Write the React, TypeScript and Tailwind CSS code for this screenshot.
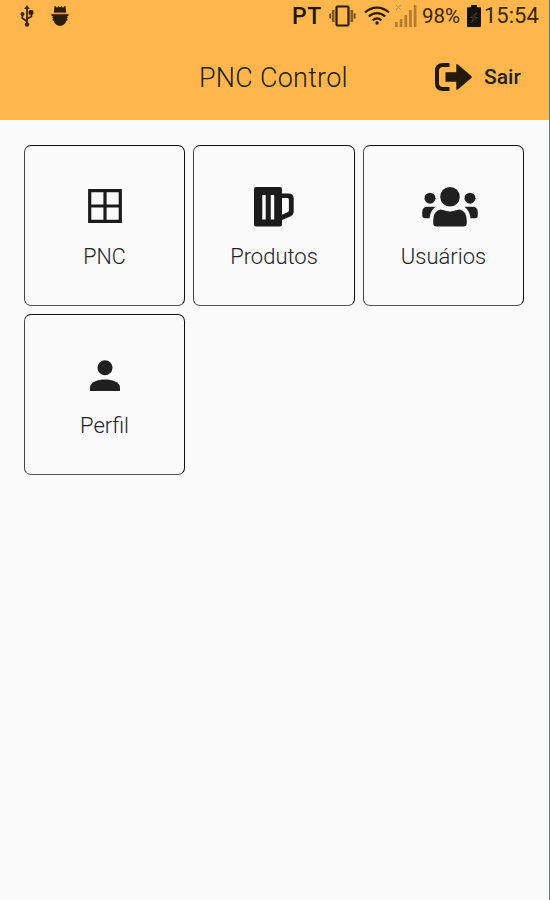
import type { ReactNode } from "react"

const UsbIcon = () => (
  <svg width="14" height="24" viewBox="0 0 14 24" fill="none" stroke="#3a2812" strokeWidth="1.800">
    <path d="M7 3v17M2.300 10.500v3.500l4.700 3.500M11.300 9.500v3L7 15" />
    <path d="M7 1l2.800 4H4.200z" fill="#3a2812" stroke="none" />
    <circle cx="7" cy="20.500" r="2.200" fill="#3a2812" stroke="none" />
    <circle cx="2.500" cy="10" r="2" fill="#3a2812" stroke="none" />
    <rect x="8.600" y="6" width="4.800" height="4.800" rx="1.500" fill="#2b1c0c" stroke="none" />
  </svg>
)

const DebugIcon = () => (
  <svg width="20" height="22" viewBox="0 0 20 22">
    <path d="M4.500 1l1.500.5L7 3l1.500-2L10 2.500 11.500 1 13 3l1-1.500 1.500-.5.700 6.800H3.800z" fill="#2b1c0c" />
    <path d="M3.500 8.300h13" stroke="#e58a55" strokeWidth="1.200" />
    <path d="M1 9.300h18l-.8 1.700H17l1 1.500-1.300.5c.2 1 .8 1.600 1.300 2l-1.600.8C15.300 19 13 21 10 21s-5.300-2-6.400-5.200L2 15c.5-.4 1.100-1 1.300-2L2 12.500 3 11H1.800z" fill="#2b1c0c" />
  </svg>
)

const VibrateIcon = () => (
  <svg width="27" height="24" viewBox="0 0 27 24" fill="none" stroke="#2b1c0c">
    <rect x="7.500" y="2.500" width="12" height="19" rx="1" strokeWidth="2.200" />
    <path d="M4.200 6v12M22.800 6v12" strokeWidth="2.600" strokeOpacity=".6" />
    <path d="M1.200 9.500v5M25.600 9.500v5" strokeWidth="1.600" strokeOpacity=".8" />
  </svg>
)

const WifiIcon = () => (
  <svg width="26" height="20" viewBox="0 0 26 20" fill="none" stroke="#2b1c0c" strokeWidth="2.200">
    <path d="M1 6.500c7-6.500 17-6.500 24 0M4.800 10.500c5-4.500 11.400-4.500 16.400 0M8.600 14.300c2.800-2.400 6-2.400 8.800 0" />
    <circle cx="13" cy="17" r="1.700" fill="#2b1c0c" stroke="none" />
  </svg>
)

const SignalIcon = () => (
  <svg width="22" height="22" viewBox="0 0 22 22" fill="#b67b31">
    <path d="M0 17h2.700v5H0zM4.700 14h2.700v8H4.700zM9.400 10h2.700v12H9.400zM14.100 5h2.700v17h-2.700zM18.800 0h2.700v22h-2.700z" />
    <path d="M1 0l5 5M6 0L1 5" stroke="#c98c40" strokeWidth="1" />
  </svg>
)

const BatteryIcon = () => (
  <svg width="14" height="22" viewBox="0 0 14 22" fill="#16120e">
    <path d="M4 0h6v2.300h3a1 1 0 0 1 1 1V21a1 1 0 0 1-1 1H1a1 1 0 0 1-1-1V3.300a1 1 0 0 1 1-1h3z" />
    <path d="M9.500 8L3.500 12.500l3 .5-2 4.500 6-5-3.500-.3z" stroke="#4b443b" strokeWidth=".8" />
  </svg>
)

const LogoutIcon = () => (
  <svg width="38" height="28" viewBox="0 0 38 28">
    <path d="M14.500 2H8Q2 2 2 8v12q0 6 6 6h6.500" fill="none" stroke="#22190f" strokeWidth="4" />
    <path d="M10.500 9.300h10.800V2.200q0-2 1.600-.6L36.300 13q1.200 1 0 2L22.900 26.400q-1.600 1.200-1.600-.6v-7H10.500z" fill="#22190f" />
  </svg>
)

const WindowIcon = () => (
  <svg width="34" height="34" viewBox="0 0 34 34" fill="none" stroke="#1b1b1b" strokeWidth="3.200">
    <path d="M1.700 1.700h30.600v30.600H1.700zM17 1.700v30.600M1.700 17h30.600" />
  </svg>
)

const BeerIcon = () => (
  <svg width="40" height="40" viewBox="0 0 40 40">
    <path d="M2 0h24q2 0 2 2v4.500h6.500q5.200 0 5.200 5.200v12.500q0 3.800-3.400 5.200L28 33v4.500q0 2-2 2H2q-2 0-2-2V2q0-2 2-2zM28 11v16.800l5.500-2.500q1.400-.6 1.400-2V12.500q0-1.500-1.500-1.500zM8.300 8v24.500h3.400V8zM16.800 8v24.500h3.400V8z" fill="#1b1b1b" fillRule="evenodd" />
  </svg>
)

const UsersIcon = () => (
  <svg width="56" height="40" viewBox="0 0 56 40" fill="#202020">
    <circle cx="28" cy="9.800" r="9.800" />
    <circle cx="8" cy="11.200" r="5.500" />
    <circle cx="48" cy="11.200" r="5.500" />
    <path d="M18.500 22.500q1.400 0 2.500.5 7 2.800 14 0 1.100-.5 2.500-.5 7.300 1.500 7.300 11V36q0 3.500-3.500 3.500H14.700q-3.500 0-3.500-3.500v-2.500q0-9.500 7.300-11z" />
    <path d="M5.500 19.700h8q-5 3.800-6 11.500H3.200q-3 0-3-3v-2.700q0-5.800 5.300-5.800zM42.500 19.700h8q5.300 0 5.300 5.800v2.700q0 3-3 3h-4.300q-1-7.700-6-11.500z" />
  </svg>
)

const PersonIcon = () => (
  <svg width="30" height="32" viewBox="0 0 30 32" fill="#202020">
    <circle cx="15" cy="7.700" r="7.500" />
    <path d="M0 31v-3.500C0 22 8 19.500 15 19.500s15 2.500 15 8V31z" />
  </svg>
)

type Tile = { label: string; icon: ReactNode; iconClass: string; textClass: string }

const tiles: Tile[] = [
  { label: "PNC", icon: <WindowIcon />, iconClass: "pb-[2px]", textClass: "text-[21.5px]" },
  { label: "Produtos", icon: <BeerIcon />, iconClass: "", textClass: "text-[22px]" },
  { label: "Usuários", icon: <UsersIcon />, iconClass: "pl-[12px]", textClass: "text-[22px]" },
  { label: "Perfil", icon: <PersonIcon />, iconClass: "", textClass: "text-[22px]" },
]

const App = () => {
  return (
    <main className="h-[900px] w-[550px] overflow-hidden border-r border-[#62778a] bg-[#fafafa] font-['Roboto',sans-serif] text-[#222]">
      <header className="h-[120px] bg-[#ffb74d]">
        {/* Status bar */}
        <div className="flex h-8 items-center pl-5 text-[#39260f]">
          <UsbIcon />
          <div className="ml-[16px]"><DebugIcon /></div>
          <span className="ml-[222px] w-[37px] text-[23px] leading-none font-medium tracking-[0.5px] text-[#21170c]">PT</span>
          <VibrateIcon />
          <div className="ml-2"><WifiIcon /></div>
          <div className="ml-[5px]"><SignalIcon /></div>
          <span className="ml-[5px] w-[45px] text-[20.5px] leading-none whitespace-nowrap">98%</span>
          <BatteryIcon />
          <span className="ml-[3px] text-[22px] leading-none whitespace-nowrap">15:54</span>
        </div>

        {/* Title and logout */}
        <div className="flex h-[88px] items-center">
          <h1 className="mt-[4px] ml-[199px] w-[236px] text-[27px] leading-none font-light tracking-[0.25px] whitespace-nowrap">PNC Control</h1>
          <button className="flex items-center pt-[2px]">
            <LogoutIcon />
            <span className="ml-[11px] text-[21px] leading-none font-medium">Sair</span>
          </button>
        </div>
      </header>

      <section className="grid grid-cols-[161px_162px_161px] gap-x-2 gap-y-2 pt-[25px] pl-6">
        {tiles.map((tile) => (
          <button key={tile.label} className="flex h-[161px] flex-col items-center rounded-[7px] border border-t-[#111] border-r-[#111] border-b-[#555] border-l-[#444] pt-[40px]">
            <div className={`flex h-[42px] items-center ${tile.iconClass}`}>{tile.icon}</div>
            <span className={`mt-[16px] leading-[26px] font-light ${tile.textClass}`}>{tile.label}</span>
          </button>
        ))}
      </section>
    </main>
  )
}

export default App
